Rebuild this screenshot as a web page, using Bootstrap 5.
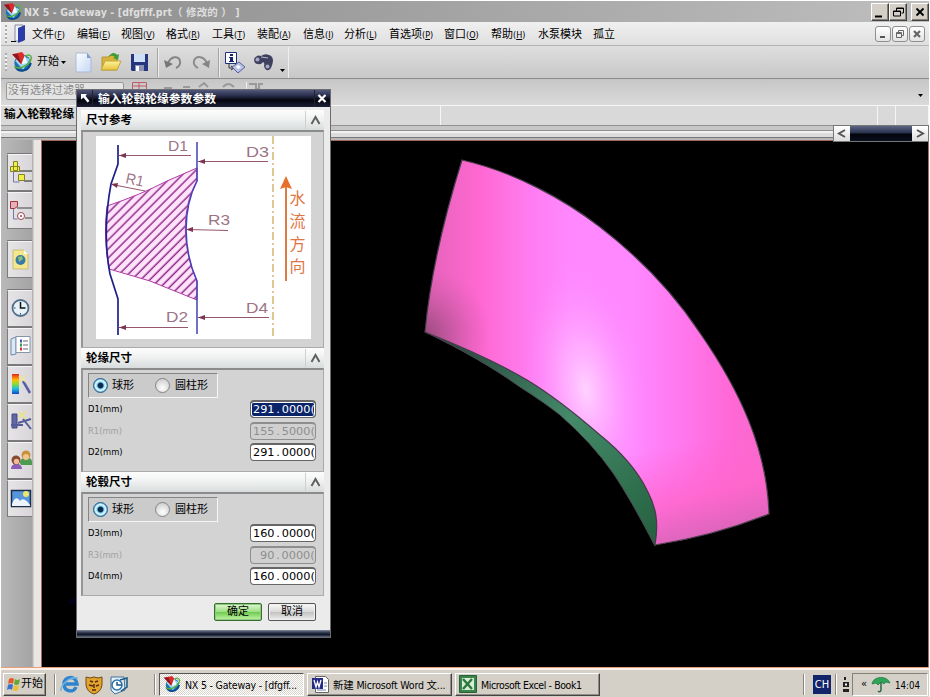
<!DOCTYPE html>
<html lang="zh-CN">
<head>
    <meta charset="UTF-8">
    <meta name="viewport" content="width=device-width, initial-scale=1.0">
    <title>NX 5 - Gateway</title>
    <link href="https://cdn.jsdelivr.net/npm/bootstrap@5.3.0/dist/css/bootstrap.min.css" rel="stylesheet">
    <style>
        body {
            width: 930px;
            height: 697px;
            overflow: hidden;
            background: #fff;
            color: #000;
            font: 11px/14px "DejaVu Sans Condensed", "Noto Sans CJK SC", sans-serif;
            white-space: nowrap;
        }
        svg { display: block; flex: none; }
        .app { width: 930px; height: 697px; padding: 1px 1px 0 1px; }

        /* window caption */
        .caption { height: 21px; background: linear-gradient(90deg, #8e8e8e, #a2a2a2 45%, #bebebe); color: #dedede; padding-left: 2px; font-weight: bold; }
        .caption-text { margin-left: 2px; padding-top: 1px; white-space: pre; font-size: 10.5px; letter-spacing: .1px; }
        .winbtn { width: 18px; height: 18px; background: #d4d0c8; border: 1px solid; border-color: #fff #444 #444 #fff; box-shadow: inset -1px -1px #858178; }
        .mdibtn { width: 16px; height: 16px; margin-left: 1px; border: 1px solid #8f8f8f; border-radius: 3px; background: linear-gradient(#fff, #e4e4e4); }

        /* menu */
        .menubar { height: 24px; background: linear-gradient(#f0f0f0, #dfdfdf); border-bottom: 1px solid #b4b4b4; }
        .menus { grid-template-columns: 45px 44px 45px 46px 45px 46px 41px 45px 55px 47px 47px 55px 40px; padding-top: 2px; }
        .menus b { font: 9px/14px "DejaVu Sans Condensed", sans-serif; }
        .grip { width: 2px; height: 18px; background: repeating-linear-gradient(#aaa 0 2px, #f4f4f4 2px 4px); }

        /* toolbars */
        .toolbar { height: 33px; background: linear-gradient(#dedede, #c8c8c8); border-bottom: 1px solid #8c8c8c; }
        .filterbar { height: 26px; background: linear-gradient(#c6c6c6, #dadada); padding: 3px 5px; }
        .filter { width: 118px; height: 18px; border: 1px solid #999; border-radius: 2px; background: #e4e4e4; color: #888; padding-left: 1px; line-height: 15px; }
        .promptbar { height: 20px; border-top: 1px solid #f6f6f6; background: #d9d9d9; }
        .prompt-text { width: 440px; padding-left: 3px; font-size: 11.7px; font-weight: bold; line-height: 17px; border-right: 1px solid #f6f6f6; }
        .strip { height: 15px; background: linear-gradient(#929292 0 1px, #c6c6c6 1px 5px, #8f8f8f 5px 6px, #f2f2f2 6px 8px, #dcdcdc 8px 12px, #777 12px 13px, #b8b8b8 13px); }

        /* resource bar */
        .resources { width: 31px; padding: 14px 0 0 6px; background: linear-gradient(90deg, #b9b9b9, #a4a4a4); }
        .resbtn { width: 25px; height: 37px; margin-bottom: 1px; background: linear-gradient(90deg, #e6e4e6, #d8d6d8); border: 1px solid #7c7c7c; border-top-color: #f4f4f4; border-right: 0; box-shadow: 0 -1px #777; }
        .resbtn.apart { margin-top: 12px; }
        .splitter { width: 9px; background: linear-gradient(90deg, #b2b2b2 0 1px, #e9e7e3 2px); }
        .viewport { background: #000; border: 1px solid #a5685c; border-bottom: 0; }

        /* taskbar */
        .taskbar { height: 30px; background: linear-gradient(#e79f80 0 1px, #fdf1ea 1px 3px, #d4d0c8 3px); padding: 5px 1px 1px 2px; }
        .raised { background: #d4d0c8; border: 1px solid; border-color: #fff #444 #444 #fff; box-shadow: inset -1px -1px #928e86; }
        .pressed { border: 1px solid; border-color: #555 #fff #fff #555; background: repeating-conic-gradient(#fff 0 25%, #d8d4cc 0 50%) 0 0 / 2px 2px; }
        .startbtn { width: 43px; height: 23px; padding-left: 3px; }
        .task { width: 145px; height: 23px; margin-left: 3px; font-size: 10.5px; padding-left: 3px; letter-spacing: -.2px; }
        .task span { margin-left: 4px; padding-top: 1px; }
        .task.tight { letter-spacing: -.4px; }
        .divider { width: 2px; height: 21px; border-left: 1px solid #8b877f; border-right: 1px solid #fff; }
        .lang { width: 18px; height: 19px; background: #12246a; color: #fff; line-height: 19px; }
        .tray { width: 76px; height: 23px; border: 1px solid; border-color: #858178 #fff #fff #858178; }

        /* dialog */
        .dlg { left: 76px; top: 89px; width: 255px; height: 549px; border: 1px solid #6c6c70; background: #ebebeb; z-index: 5; }
        .dlg-title { height: 17px; background: linear-gradient(#52587a, #272c49 35%, #05060e 60%, #1c2036); color: #fff; font-weight: bold; font-size: 11.8px; line-height: 14px; }
        .dlg-title .cell { width: 16px; height: 17px; }
        .dlg-title span { margin-left: 5px; }
        .dlg-body { padding: 3px 6px 0 4px; }
        .sec-head { height: 20px; padding-left: 5px; font-weight: bold; font-size: 11.5px; background: linear-gradient(#fdfdfd, #f0f2f2 45%, #d9dcdc); }
        .sec-head .toggle { width: 19px; height: 18px; border-left: 1px solid #cfcfcf; }
        .sec-body { background: #d3d3d3; border: 1px solid #999; border-width: 2px 1px 1px 2px; border-color: #8b8b8b #aaa #aaa #969696; }
        .sec-picture { height: 218px; padding: 4px 0 0 13px; }
        .sec-form { height: 104px; padding: 3px 7px 0 5px; }
        .choices { width: 130px; height: 25px; padding-left: 4px; background: #cbcbcb; border: 1px solid; border-color: #858585 #f6f6f6 #f6f6f6 #858585; }
        .choices span { margin-left: 4px; padding-top: 1px; }
        .dot { width: 15px; height: 15px; border-radius: 50%; border: 1px solid #858585; background: radial-gradient(circle at 50% 70%, #fff, #c4c4c4); }
        .dot.on { border-color: #25608c; background: radial-gradient(circle, #0b2b4c 0 2.4px, #87d7fa 3.5px, #e2f8ff 5px, #4b9fd0 7px); }
        .dot.gap { margin: 0 1px 0 21px; }
        .field { height: 21.7px; font-size: 9.3px; }
        .field .value { width: 66px; height: 18px; overflow: hidden; padding-left: 2px; border: 1px solid #666; border-top-width: 2px; border-radius: 4px; background: #fff; font: 11.3px/15px "DejaVu Sans", sans-serif; }
        .field .value i { font-style: normal; padding: 0 1.8px; }
        .field.off { color: #a0a0a0; }
        .field.off .value { background: #d0d0d0; border-color: #8e8e8e; color: #8e8e8e; }
        .field .value.sel { background: #0a246a; color: #fff; box-shadow: inset 0 0 0 1px #fff; }
        .field .value.short { padding-left: 9px; }
        .dlg-foot { height: 34px; padding: 0 8px 2px; gap: 6px; }
        .dbtn { width: 48px; height: 18px; border: 1px solid #555; border-radius: 2px; line-height: 16px; background: linear-gradient(#fafafa, #d8d8d8 50%, #c2c2c2 52%, #efefef); box-shadow: inset 0 0 0 1px #f1f1f1; }
        .dbtn.ok { border-color: #34702e; background: linear-gradient(#e1f8d4, #9edf85 48%, #70cb52 52%, #c4f6a8); box-shadow: inset 0 0 0 1px #91c785; }
        .dlg-end { height: 8px; background: linear-gradient(#8b91a0, #39435d 30%, #101525 65%, #59657c); }

        .viewscroll { left: 833px; top: 125px; width: 96px; height: 17px; border: 1px solid #777; background: linear-gradient(#5b6683, #29324d 45%, #02040a 55%, #0a0f1f); z-index: 4; }
        .viewscroll div { width: 16px; background: linear-gradient(#fff, #ddd); }
    </style>
</head>
<body>
    <!-- shared NX logo -->
    <svg width="0" height="0" class="position-absolute">
        <symbol id="nx" viewBox="0 0 20 20">
            <circle cx="10.500" cy="11" r="7.5" fill="#1f72b8"/>
            <path d="M4 9C6 5 14 4 17 8L11 17Z" fill="#9fd6ec"/>
            <path d="M4 14C7 20 16 19 18 11" fill="none" stroke="#0c4c8e" stroke-width="2"/>
            <path d="M3 14C8 18 18 12 18.500 6C18 3 15 3 13 5" fill="none" stroke="#58b340" stroke-width="1.400"/>
            <path d="M1 3L10 1L12.500 4L9.500 12Z" fill="#dc2c2a"/>
            <path d="M1 3L6 2.500L9.500 12Z" fill="#8d1722"/>
            <path d="M9.500 12L12.500 4L15 11Z" fill="#eefaff"/>
        </symbol>
    </svg>

    <div class="app d-flex flex-column">
        <div class="caption d-flex align-items-center">
            <svg width="19" height="19"><use href="#nx"/></svg>
            <div class="caption-text">NX 5 - Gateway - [dfgfff.prt（ 修改的 ） ]</div>
            <div class="d-flex ms-auto">
                <div class="winbtn"><svg width="16" height="16"><path d="M3 11.5h7v2h-7z"/></svg></div>
                <div class="winbtn"><svg width="16" height="16"><path d="M6.5 8V4h7v5h-2M6 4.5h8M3.500 7v5h7V7zM3 7.500h8" fill="none" stroke="#000"/></svg></div>
                <div class="winbtn ms-1"><svg width="16" height="16"><path d="M4.500 4.500l7 7M11.500 4.500l-7 7" stroke="#000" stroke-width="1.800"/></svg></div>
            </div>
        </div>

        <div class="menubar d-flex align-items-center">
            <div class="grip ms-1"></div>
            <svg class="ms-1" width="17" height="20" viewBox="0 0 17 20"><path d="M4 1h8v16H4z" fill="#eef2ff" stroke="#889"/><path d="M7 4l7-3v15l-7 3z" fill="#2b3ba8"/><path d="M0 17h5v1H0z"/></svg>
            <div class="menus d-grid ms-1">
                <span>文件<b>(<u>F</u>)</b></span><span>编辑<b>(<u>E</u>)</b></span><span>视图<b>(<u>V</u>)</b></span><span>格式<b>(<u>R</u>)</b></span><span>工具<b>(<u>T</u>)</b></span><span>装配<b>(<u>A</u>)</b></span><span>信息<b>(<u>I</u>)</b></span><span>分析<b>(<u>L</u>)</b></span><span>首选项<b>(<u>P</u>)</b></span><span>窗口<b>(<u>O</u>)</b></span><span>帮助<b>(<u>H</u>)</b></span><span>水泵模块</span><span>孤立</span>
            </div>
            <div class="d-flex ms-auto me-1">
                <div class="mdibtn"><svg width="14" height="14"><path d="M4 9h5v2H4z" fill="#555"/></svg></div>
                <div class="mdibtn"><svg width="14" height="14"><path d="M5.500 5V3.500h5v5H9M3.500 5.500h5v5h-5zM3 6.500h6" fill="none" stroke="#666"/></svg></div>
                <div class="mdibtn"><svg width="14" height="14"><path d="M4 4l6 6M10 4l-6 6" stroke="#666" stroke-width="2.200"/></svg></div>
            </div>
        </div>

        <div class="toolbar d-flex align-items-center">
            <div class="grip ms-1"></div>
            <svg class="ms-1" width="22" height="22"><use href="#nx"/></svg>
            <span class="ms-1">开始</span>
            <svg width="230" height="32" viewBox="59 46 230 32">
                <defs>
                    <linearGradient id="paper" x2="1" y2="1"><stop stop-color="#fff"/><stop offset="1" stop-color="#c3d7f4"/></linearGradient>
                    <linearGradient id="folder" x2="0" y2="1"><stop stop-color="#fbf59a"/><stop offset="1" stop-color="#e9c23c"/></linearGradient>
                </defs>
                <path d="M61 61h5l-2.500 3z"/>
                <path d="M76 53h11l4 5v14H76z" fill="url(#paper)" stroke="#a9bad8"/><path d="M87 53v5h4z" fill="#7c9cd0"/>
                <path d="M102 57h6l2-2h7v15h-15z" fill="#d9b236" stroke="#b8983a"/><path d="M101 70l4-9h16l-4 9z" fill="url(#folder)" stroke="#c2a63c"/><path d="M109 57c2-5 6-5 8-2l2-1-1 6-5-2 2-1c-2-2-4-2-6 0z" fill="#3c9b37"/>
                <path d="M131 54h17v17h-16l-1-1z" fill="#26367e"/><path d="M134 54h11v8h-11z" fill="#cde0f6"/><path d="M135 65h9v6h-9z" fill="#8c93b4"/><path d="M136 66h3v5h-3z" fill="#fff"/>
                <path d="M157.500 48v29M218.500 48v29" stroke="#a5a5a5"/><path d="M158.500 48v29M219.500 48v29M288.500 47v31" stroke="#eee"/>
                <path d="M168 64c2-8 11-9 12-3c1 4-2 6-4 7" fill="none" stroke="#858585" stroke-width="2"/><path d="M164 60l2 8 7-4z" fill="#777"/>
                <path d="M207 64c-2-8-11-9-13-3c-1 4 2 6 4 7" fill="none" stroke="#8c8c8c" stroke-width="2"/><path d="M210 60l-1 8-7-4z" fill="#858585"/>
                <path d="M225.500 52.500h11v11h-11z" fill="#fff" stroke="#223278"/><path d="M230 54h3v2h-3zM229 57h4v4h1v1h-5v-1h1v-3h-1z" fill="#17236c"/><path d="M229 64v4h4M231 66l3 2-3 2" fill="none" stroke="#333"/><path d="M239 62l6 5-7 6-6-6z" fill="#b7c1e3" stroke="#5662a0"/><path d="M238 65l3 2-3 2-2-2z" fill="#fff"/>
                <path d="M254 59q3-5 7-3 4-3 8-1 4 1 4 6-1 7-4 9-4 1-5-4 1-3-1-4-2 3-5 2-4 0-4-5z" fill="#3e405f"/><circle cx="257.500" cy="59.500" r="2" fill="#a5a9c4"/><circle cx="267.500" cy="66.500" r="2" fill="#a5a9c4"/><path d="M261 57l7 1" stroke="#b8bace"/>
                <path d="M280 69h5l-2.500 3z"/>
            </svg>
        </div>

        <div class="filterbar d-flex">
            <div class="filter">没有选择过滤器</div>
            <svg class="ms-2" width="140" height="16" viewBox="0 0 140 16"><path d="M.5 10V.500h14V10M7 0v8M0 4h14" fill="none" stroke="#c05b68"/><path d="M32 6h8M51 5h7M67 5l5-4 4 4M91 5q5-6 11 0M117 2h7v5h3V2h4" fill="none" stroke="#9a9a9a" stroke-width="2"/><path d="M114.500 0v14" stroke="#eee"/></svg>
            <svg class="ms-auto align-self-center" width="6" height="14"><path d="M0 9h5l-2.500 3z"/></svg>
        </div>

        <div class="promptbar d-flex">
            <div class="prompt-text">输入轮毂轮缘</div>
            <svg class="ms-auto" width="52" height="19"><path d="M.5 0v19M18.500 0v19M51.500 0v19" stroke="#f5f5f5"/></svg>
        </div>
        <div class="strip"></div>

        <div class="d-flex flex-grow-1">
            <div class="resources">
                <div class="resbtn"><svg width="24" height="35" viewBox="7 154 24 35"><path d="M12.500 171v10h6" fill="none" stroke="#7377ab"/><path d="M14 170h17M23 180h8" stroke="#222"/><path d="M9.500 165.500h9v5h-9zM12.500 160.500h4v9h-4zM17.500 173.500h6v6h-6z" fill="#f1ef42" stroke="#85822e"/></svg></div>
                <div class="resbtn"><svg width="24" height="35" viewBox="7 192 24 35"><path d="M12.500 208v10h4" fill="none" stroke="#7377ab"/><path d="M16 207h15M24 217h7" stroke="#444"/><path d="M9.500 200.500h7v5l-3 2h-4z" fill="#e7b0b5" stroke="#9e3440"/><circle cx="20" cy="215" r="3.500" fill="#fff" stroke="#9c4048"/><circle cx="20" cy="215" r="1" fill="#9c4048"/></svg></div>
                <div class="resbtn apart"><svg width="24" height="35" viewBox="7 242 24 35"><path d="M12 250h11l4 4v15H12z" fill="#f5e78b" stroke="#c5bd7e"/><path d="M23 250v4h4z" fill="#fff"/><circle cx="19.500" cy="260" r="5" fill="#3978ad"/><path d="M17 257l4-1 1 3-4 3z" fill="#8ac06d"/></svg></div>
                <div class="resbtn apart"><svg width="24" height="35" viewBox="7 291 24 35"><circle cx="19.500" cy="308" r="8" fill="#e7f1f8" stroke="#526f8a" stroke-width="1.800"/><path d="M19.500 302v6h5" fill="none" stroke="#111" stroke-width="1.500"/><path d="M13 308h1.500M19.500 313v1.500" stroke="#345"/></svg></div>
                <div class="resbtn"><svg width="24" height="35" viewBox="7 329 24 35"><path d="M10 339l5-2v17l-5 1z" fill="#dce9f5" stroke="#6d8aa8"/><path d="M15 336.500h14v16H15z" fill="#fff" stroke="#8397a9"/><path d="M22 341h5M22 345h5M22 349h5" stroke="#667"/><path d="M19 341h2" stroke="#345cb0" stroke-width="3"/><path d="M19 345h2" stroke="#3a9850" stroke-width="3"/><path d="M19 349h2" stroke="#c33" stroke-width="3"/></svg></div>
                <div class="resbtn"><svg width="24" height="35" viewBox="7 367 24 35"><defs><linearGradient id="hue" x2="0" y2="1"><stop stop-color="#e32818"/><stop offset=".3" stop-color="#ffbd00"/><stop offset=".5" stop-color="#8add32"/><stop offset=".75" stop-color="#18bce0"/><stop offset="1" stop-color="#1644c4"/></linearGradient></defs><path d="M11 374h7v20h-7z" fill="url(#hue)"/><path d="M22 381l7 12" stroke="#5a60a4" stroke-width="2.500"/><path d="M18 376l7 6M25 375l-6 7" stroke="#eee49a" stroke-width="1.500"/></svg></div>
                <div class="resbtn"><svg width="24" height="35" viewBox="7 405 24 35"><path d="M11 414h5v14h-5z" fill="#6268a0" stroke="#444a80"/><path d="M10 425h12M17 423l13-4M22 419l8 10" stroke="#555c9a" stroke-width="2"/><path d="M18 412l7 7M25 411l-7 7" stroke="#eee27c" stroke-width="1.500"/></svg></div>
                <div class="resbtn"><svg width="24" height="35" viewBox="7 443 24 35"><path d="M19 463c0-7 12-7 12-1v3H20z" fill="#4b9b51"/><circle cx="25" cy="455" r="4.500" fill="#c98f3b"/><circle cx="25" cy="457" r="3" fill="#f1c58b"/><path d="M10 469c0-7 11-7 11 0z" fill="#8b5db4"/><circle cx="15" cy="460" r="4.500" fill="#884a31"/><circle cx="15.500" cy="461.500" r="2.700" fill="#f2bb98"/></svg></div>
                <div class="resbtn"><svg width="24" height="35" viewBox="7 481 24 35"><path d="M10.500 490.500h19v16h-19z" fill="#5795da" stroke="#1c2c4e" stroke-width="1.500"/><circle cx="25" cy="494" r="3" fill="#eee66c"/><path d="M11 504c2-6 5-8 8-3c3-4 7 0 10 4v1H11z" fill="#eef3fb"/></svg></div>
            </div>
            <div class="splitter"></div>
            <div class="viewport flex-grow-1">
                <svg width="886" height="526" viewBox="42 141 886 526">
                    <defs>
                        <linearGradient id="pink" gradientUnits="userSpaceOnUse" x1="425" y1="300" x2="772" y2="300">
                            <stop offset="0" stop-color="#e463b8"/><stop offset=".16" stop-color="#ff68d2"/><stop offset=".3" stop-color="#ff7cf0"/><stop offset=".42" stop-color="#ff88ff"/><stop offset=".6" stop-color="#ff88ff"/><stop offset=".74" stop-color="#ff78ee"/><stop offset=".88" stop-color="#ff68d6"/><stop offset="1" stop-color="#f46bc8"/>
                        </linearGradient>
                        <radialGradient id="glow" gradientUnits="userSpaceOnUse" cx="0" cy="0" r="1" gradientTransform="translate(586 390) rotate(-8) scale(60 125)">
                            <stop offset="0" stop-color="#ffd2ff"/><stop offset=".4" stop-color="#ffb8ff" stop-opacity=".65"/><stop offset="1" stop-color="#ff90ff" stop-opacity="0"/>
                        </radialGradient>
                        <radialGradient id="shade" gradientUnits="userSpaceOnUse" cx="422" cy="336" r="70">
                            <stop offset="0" stop-color="#924978"/><stop offset="1" stop-color="#d05aa8" stop-opacity="0"/>
                        </radialGradient>
                        <linearGradient id="low" gradientUnits="userSpaceOnUse" x1="690" y1="440" x2="714" y2="538">
                            <stop offset="0" stop-color="#ff66d0" stop-opacity="0"/><stop offset=".55" stop-color="#ff66cc" stop-opacity=".8"/><stop offset="1" stop-color="#d765b8"/>
                        </linearGradient>
                        <linearGradient id="green" gradientUnits="userSpaceOnUse" x1="440" y1="335" x2="656" y2="545">
                            <stop offset="0" stop-color="#283f3a"/><stop offset=".5" stop-color="#448a69"/><stop offset="1" stop-color="#24603f"/>
                        </linearGradient>
                        <path id="blade" d="M462 160C515 172 565 200 600 227C640 258 673 292 700 333C741 392 767 450 769 514Q714 536 655 545C659 522 656 507 647 490C637 470 620 451 600 435C577 415 552 395 527 380C495 361 463 347 425 332Q432 256 462 160Z"/>
                    </defs>
                    <path d="M425 332C463 350 495 369 520 387Q545 403 560 415Q592 443 613 473Q630 498 655 546C659 522 656 507 647 490C637 470 620 451 600 435C577 415 552 395 527 380C495 361 463 347 425 332Z" fill="url(#green)" stroke="#4b4550"/>
                    <use href="#blade" fill="url(#pink)"/>
                    <use href="#blade" fill="url(#glow)"/>
                    <use href="#blade" fill="url(#low)"/>
                    <use href="#blade" fill="url(#shade)" stroke="#493c4c" stroke-width="1.200"/>
                    <path d="M69 601l4 3M74 598v4" stroke="#00005c"/>
                </svg>
            </div>
        </div>

        <div class="taskbar d-flex align-items-center">
            <div class="raised startbtn d-flex align-items-center">
                <svg width="14" height="14" viewBox="0 0 14 14"><path d="M2 2q3-2 5 0L6 7Q4 5 1 7z" fill="#e35b28"/><path d="M8 2q2 2 5 0l-1 5q-3 2-5 0z" fill="#65a838"/><path d="M1 8q3-2 5 0l-1 5q-2-2-5 0z" fill="#3b70cc"/><path d="M7 8q2 2 5 0l-1 5q-3 2-5 0z" fill="#edc032"/></svg>
                <span>开始</span>
            </div>
            <div class="divider ms-2"></div>
            <svg class="ms-1" width="94" height="22" viewBox="61 673 94 22">
                <path d="M77 687c-2 6-12 5-12-3s12-9 13 0H67" fill="none" stroke="#2d83ce" stroke-width="3.500"/><path d="M62 691c-1-6 9-15 17-13" fill="none" stroke="#76b7e4" stroke-width="1.500"/>
                <path d="M87 677l4 1q4-2 8 0l4-1v8q-1 7-8 9q-7-2-8-9z" fill="#e4a32b" stroke="#704a18"/><path d="M91 681l3 1M96 682l3-1M90 685l4 1M97 686l3-1M93 690h4M95 684v4" stroke="#51320e" stroke-width="1.500"/>
                <path d="M112 677h13l1 13-10 4-4-4z" fill="#e4f1fb" stroke="#3f7198"/><circle cx="118" cy="685" r="5" fill="#fff" stroke="#2674ad" stroke-width="1.500"/><path d="M118 682v3h5M121 680l7-2v9l-6 4" fill="none" stroke="#195985" stroke-width="1.500"/>
            </svg>
            <div class="divider"></div>
            <div class="pressed task d-flex align-items-center"><svg width="18" height="18"><use href="#nx"/></svg><span class="ms-1">NX 5 - Gateway - [dfgff...</span></div>
            <div class="raised task d-flex align-items-center">
                <svg width="18" height="18"><path d="M4.500 1.500h10l3 3v13h-13z" fill="#fff" stroke="#666"/><path d="M1 3h11v11H1z" fill="#242c88"/><path d="M3 5l2 7 1.500-5L8 12l2-7" fill="none" stroke="#fff" stroke-width="1.300"/><path d="M13 8h3M13 11h3M6 15h9" stroke="#7780a4"/></svg><span>新建 Microsoft Word 文...</span>
            </div>
            <div class="raised task tight d-flex align-items-center">
                <svg width="18" height="18"><path d="M.5.500h17v17H.5z" fill="#378548" stroke="#2b5f37"/><path d="M3 3h12v12H3z" fill="#d8edda"/><path d="M4 4l9 10M13 4L4 14" stroke="#2e783c" stroke-width="2.500"/></svg><span>Microsoft Excel - Book1</span>
            </div>
            <div class="d-flex align-items-center ms-auto">
                <div class="divider"></div>
                <div class="lang text-center ms-2">CH</div>
                <div class="divider ms-1"></div>
                <svg width="15" height="20"><path d="M7 3h2v3H7zM6 8h6v5H6zM6 15h6v3H6z" fill="#222"/><path d="M8 9.500h2v2H8z" fill="#fff"/></svg>
                <div class="tray d-flex align-items-center ps-1"><span class="ms-1">«</span>
                    <svg class="ms-1" width="20" height="18"><path d="M1 9C2 1 16 0 19 8L15 7 13 9 10 7 7 10 5 8z" fill="#31a358" stroke="#18753b" stroke-width=".7"/><path d="M10 7v8q-1 3-3 1" fill="none" stroke="#286940" stroke-width="1.500"/></svg>
                    <small class="ms-1 pt-1">14:04</small>
                </div>
            </div>
        </div>
    </div>

    <div class="viewscroll position-absolute d-flex justify-content-between">
        <div><svg width="16" height="15"><path d="M11 4L5 7.500 11 11" fill="none" stroke="#555" stroke-width="2"/></svg></div>
        <div><svg width="16" height="15"><path d="M5 4l6 3.500L5 11" fill="none" stroke="#555" stroke-width="2"/></svg></div>
    </div>

    <div class="dlg position-absolute d-flex flex-column">
        <div class="dlg-title d-flex align-items-center">
            <div class="cell border-end border-dark"><svg width="16" height="17"><path d="M4 4h6L8.500 6l4 5-2 1.500-4-5L4 9.500z" fill="#fff"/></svg></div>
            <span>输入轮毂轮缘参数参数</span>
            <div class="cell border-start border-dark ms-auto"><svg width="15" height="17"><path d="M3.500 5l7 7M10.500 5l-7 7" stroke="#fff" stroke-width="2.200"/></svg></div>
        </div>
        <div class="dlg-body flex-grow-1">
            <div class="sec-head d-flex align-items-center justify-content-between">尺寸参考<div class="toggle"><svg width="18" height="18"><path d="M5.500 13l4-7 4 7" fill="none" stroke="#606060" stroke-width="2"/></svg></div></div>
            <div class="sec-body sec-picture">
                <svg width="215" height="203" viewBox="96 136 215 203">
                    <defs>
                        <pattern id="hatch" patternUnits="userSpaceOnUse" width="6.400" height="6.400" patternTransform="rotate(-45)"><path d="M0 0h6.400v6.400H0z" fill="#ffe3fb"/><path d="M0 3h6.400" stroke="#8e2b88" stroke-width="1.500"/></pattern>
                    </defs>
                    <path d="M96 136h215v203H96z" fill="#fff"/>
                    <path d="M107 206Q140 195 167 181L197 168V181C180 210 183 250 197 281V300L150 281Q130 275 109 269Q103 236 107 206Z" fill="url(#hatch)" stroke="#b03aa6"/>
                    <path d="M118 145V164L111 184Q102 232 110 274L118 299V335" fill="none" stroke="#20208c" stroke-width="1.700"/>
                    <path d="M197 142V181C182 210 183 250 197 281V334" fill="none" stroke="#4340bc" stroke-width="1.500"/>
                    <path d="M119 155.500H191M198 161.500H268M112 184.500L145 191M187 229.500L228 230.500M119 327.500H188M198 317.500H269" stroke="#94576d"/>
                    <path d="M119 155.500l7-2.500v5zM198 161.500l7-2.500v5zM111 184l7-1-1 5zM186 229.500l7-2.500v5zM119 327.500l7-2.500v5zM198 317.500l7-2.500v5z" fill="#7f3352"/>
                    <g font-family="Liberation Sans" font-size="15" fill="#9c7485">
                        <text x="168" y="151" textLength="20" lengthAdjust="spacingAndGlyphs">D1</text><text x="246" y="157" textLength="23" lengthAdjust="spacingAndGlyphs">D3</text>
                        <text x="125" y="183" textLength="18" lengthAdjust="spacingAndGlyphs" transform="rotate(12 125 183)">R1</text><text x="208" y="225" textLength="22" lengthAdjust="spacingAndGlyphs">R3</text>
                        <text x="166" y="322" textLength="22" lengthAdjust="spacingAndGlyphs">D2</text><text x="246" y="313" textLength="22" lengthAdjust="spacingAndGlyphs">D4</text>
                    </g>
                    <path d="M273 136V337" stroke="#dfc797" stroke-width="2" stroke-dasharray="8 3 2 3"/>
                    <path d="M286 281V185" stroke="#df7b44" stroke-width="2"/><path d="M286 176l-6 13 6-2 6 2z" fill="#e86e2b"/>
                    <g font-family="Noto Sans CJK SC" font-size="16" fill="#df7544"><text x="289.500" y="204">水</text><text x="289.500" y="227">流</text><text x="289.500" y="250">方</text><text x="289.500" y="272">向</text></g>
                </svg>
            </div>
            <div class="sec-head d-flex align-items-center justify-content-between">轮缘尺寸<div class="toggle"><svg width="18" height="18"><path d="M5.500 13l4-7 4 7" fill="none" stroke="#606060" stroke-width="2"/></svg></div></div>
            <div class="sec-body sec-form">
                <div class="choices d-flex align-items-center"><i class="dot on"></i><span>球形</span><i class="dot gap"></i><span>圆柱形</span></div>
                <div class="field d-flex align-items-center justify-content-between">D1(mm)<div class="value sel">291<i>.</i>0000(</div></div>
                <div class="field off d-flex align-items-center justify-content-between">R1(mm)<div class="value">155<i>.</i>5000(</div></div>
                <div class="field d-flex align-items-center justify-content-between">D2(mm)<div class="value">291<i>.</i>0000(</div></div>
            </div>
            <div class="sec-head d-flex align-items-center justify-content-between">轮毂尺寸<div class="toggle"><svg width="18" height="18"><path d="M5.500 13l4-7 4 7" fill="none" stroke="#606060" stroke-width="2"/></svg></div></div>
            <div class="sec-body sec-form">
                <div class="choices d-flex align-items-center"><i class="dot on"></i><span>球形</span><i class="dot gap"></i><span>圆柱形</span></div>
                <div class="field d-flex align-items-center justify-content-between">D3(mm)<div class="value">160<i>.</i>0000(</div></div>
                <div class="field off d-flex align-items-center justify-content-between">R3(mm)<div class="value short">90<i>.</i>0000(</div></div>
                <div class="field d-flex align-items-center justify-content-between">D4(mm)<div class="value">160<i>.</i>0000(</div></div>
            </div>
            <div class="dlg-foot d-flex align-items-center justify-content-end">
                <div class="dbtn ok text-center">确定</div>
                <div class="dbtn text-center">取消</div>
            </div>
        </div>
        <div class="dlg-end"></div>
    </div>
    <script src="https://cdn.jsdelivr.net/npm/bootstrap@5.3.0/dist/js/bootstrap.bundle.min.js"></script>
</body>
</html>
